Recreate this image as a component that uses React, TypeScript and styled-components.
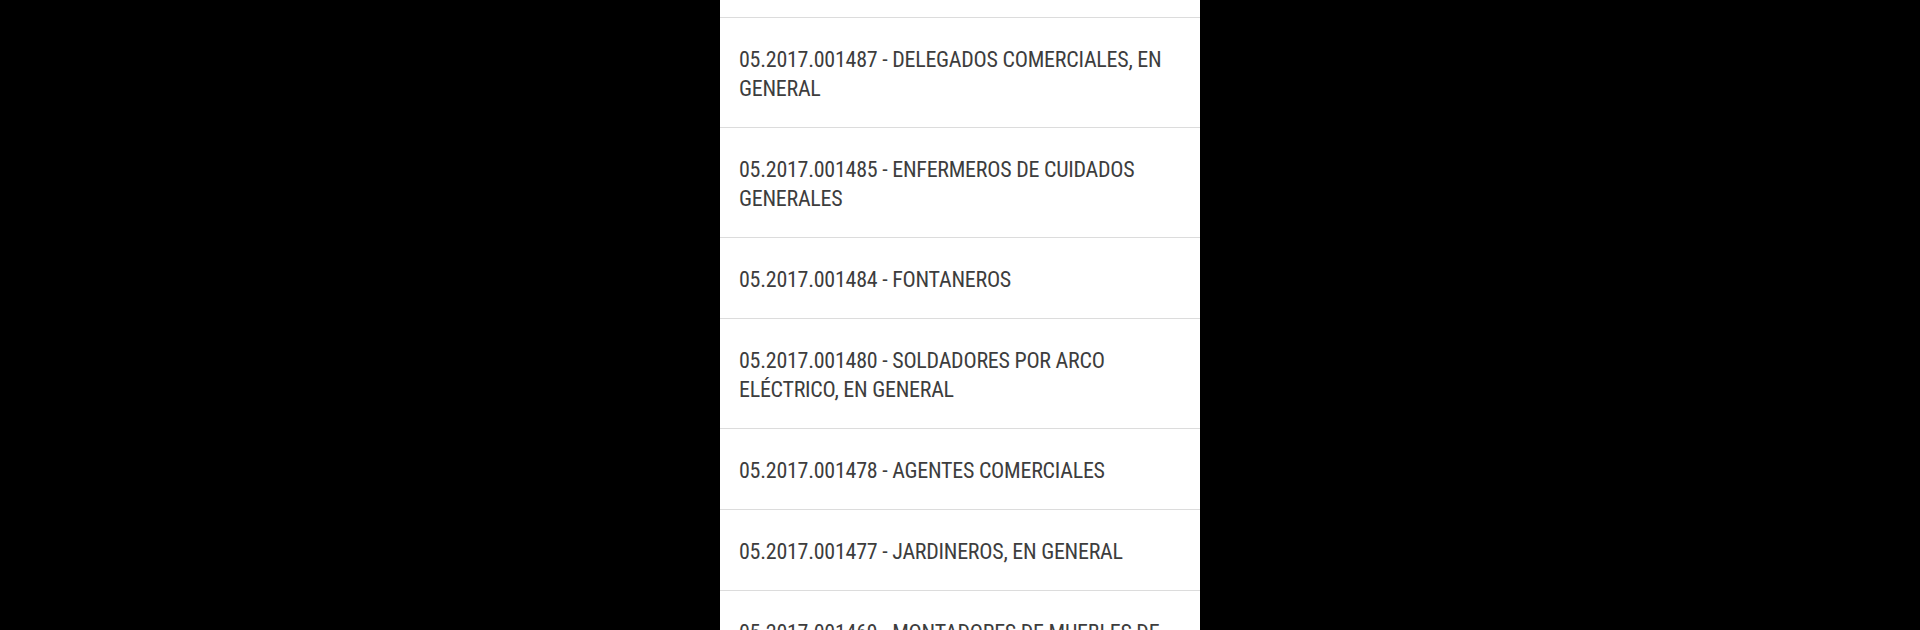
import React, { useLayoutEffect, useRef } from "react";
import styled, { createGlobalStyle } from "styled-components";

const GlobalStyle = createGlobalStyle`
  html, body {
    margin: 0;
    padding: 0;
    background: #000000;
    height: 100%;
  }
  #root {
    height: 100%;
  }
  * {
    box-sizing: border-box;
  }
`;

const Stage = styled.div`
  width: 1920px;
  height: 630px;
  background: #000000;
  display: flex;
  justify-content: center;
  overflow: hidden;
`;

const Panel = styled.div`
  width: 480px;
  height: 630px;
  background: #ffffff;
  overflow: hidden;
`;

const List = styled.ul`
  list-style: none;
  margin: 0;
  padding: 0;
`;

const Row = styled.li`
  padding: 27px 24px 24px 19px;
  border-bottom: 1px solid #dcdcdc;
  font-family: Roboto, "Noto Sans", "Liberation Sans", sans-serif;
  font-size: 22px;
  font-stretch: 75%;
  line-height: 29px;
  color: #3d3d3d;
  letter-spacing: -0.25px;
`;

const items = [
  "05.2017.001488 - CAMAREROS ASALARIADOS",
  "05.2017.001487 - DELEGADOS COMERCIALES, EN GENERAL",
  "05.2017.001485 - ENFERMEROS DE CUIDADOS GENERALES",
  "05.2017.001484 - FONTANEROS",
  "05.2017.001480 - SOLDADORES POR ARCO ELÉCTRICO, EN GENERAL",
  "05.2017.001478 - AGENTES COMERCIALES",
  "05.2017.001477 - JARDINEROS, EN GENERAL",
  "05.2017.001469 - MONTADORES DE MUEBLES DE MADERA O SIMILARES",
  "05.2017.001466 - PINTORES Y EMPAPELADORES",
];

export default function App() {
  const panelRef = useRef<HTMLDivElement>(null);
  const firstRef = useRef<HTMLLIElement>(null);
  useLayoutEffect(() => {
    if (panelRef.current && firstRef.current) {
      panelRef.current.scrollTop = firstRef.current.offsetHeight - 18;
    }
  }, []);
  return (
    <>
      <GlobalStyle />
      <Stage>
        <Panel ref={panelRef}>
          <List>
            {items.map((t, i) => (
              <Row key={t} ref={i === 0 ? firstRef : undefined}>
                {t}
              </Row>
            ))}
          </List>
        </Panel>
      </Stage>
    </>
  );
}
